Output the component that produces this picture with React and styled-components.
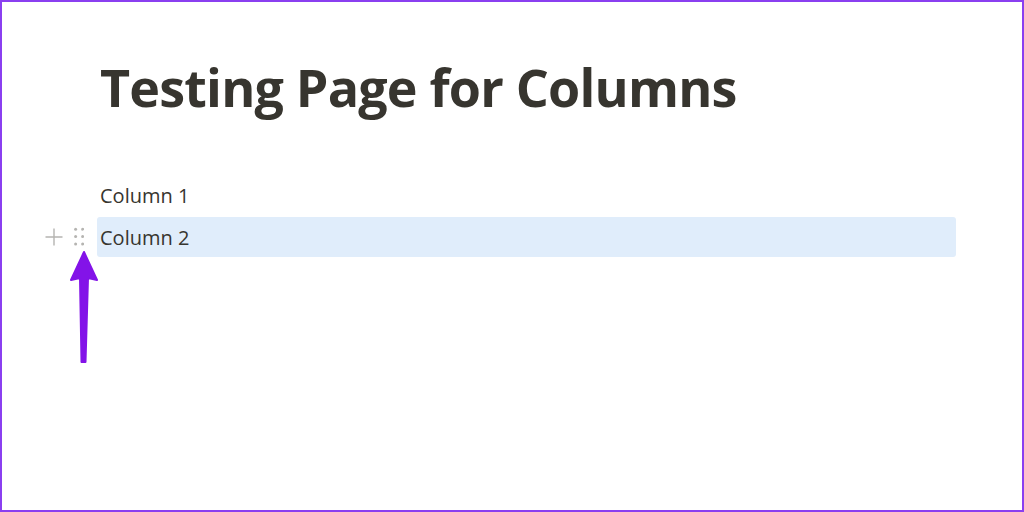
import React from 'react'
import styled, { createGlobalStyle } from 'styled-components'

const GlobalStyle = createGlobalStyle`
  html, body {
    margin: 0;
    padding: 0;
    background: #ffffff;
  }
  * {
    box-sizing: border-box;
  }
`;

const Frame = styled.div`
  width: 1024px;
  height: 512px;
  border: 2px solid #8a3ff0;
  background: #ffffff;
  position: relative;
  overflow: hidden;
  font-family: "Open Sans", "Noto Sans", sans-serif;
  color: #37352f;
`;

const Content = styled.div`
  width: 859px;
  margin-left: 95px;
  display: flex;
  flex-direction: column;
`;

const Title = styled.h1`
  margin: 54px 0 0 0;
  padding: 0 3px;
  font-size: 52px;
  line-height: 1.2;
  font-weight: 700;
  letter-spacing: -0.8px;
  color: #37352f;
`;

const Blocks = styled.div`
  margin-top: 57px;
  display: flex;
  flex-direction: column;
  gap: 2px;
`;

const Block = styled.div`
  position: relative;
  height: 40px;
  padding: 1px 3px 0 3px;
  font-size: 20px;
  line-height: 39px;
  border-radius: 3px;
  background: ${({ selected }) => (selected ? '#e0edfb' : 'transparent')};
`;

const Handles = styled.div`
  position: absolute;
  left: -53px;
  top: 0;
  height: 40px;
  display: flex;
  align-items: center;
  gap: 10px;
`;

const Arrow = styled.svg`
  position: absolute;
  left: 64px;
  top: 248px;
`;

const PlusIcon = () => (
  <svg width="20" height="20" viewBox="0 0 20 20">
    <path d="M10 1.5V18.5M1.5 10H18.5" stroke="#b5b4b1" strokeWidth="1.4" fill="none" />
  </svg>
)

const DragIcon = () => (
  <svg width="10" height="20" viewBox="0 0 10 20">
    {[2.2, 9.6, 17].map((y) =>
      [1.6, 8.6].map((x) => (
        <circle key={`${x}-${y}`} cx={x} cy={y} r="1.5" fill="#b5b4b1" />
      ))
    )}
  </svg>
)

const blocks = [
  { text: 'Column 1' },
  { text: 'Column 2', selected: true },
]

const App = () => {
  return (
    <>
      <GlobalStyle />
      <Frame>
        <Content>
          <Title>Testing Page for Columns</Title>
          <Blocks>
            {blocks.map((b, i) => (
              <Block key={i} selected={b.selected}>
                {b.selected && (
                  <Handles>
                    <PlusIcon />
                    <DragIcon />
                  </Handles>
                )}
                {b.text}
              </Block>
            ))}
          </Blocks>
        </Content>
        <Arrow width="36" height="116" viewBox="0 0 36 116">
          <path
            d="M18 2 L31 30 L22 28 L19.5 112 L15.5 112 L14 28 L5 30 Z"
            fill="#8313e8"
            stroke="#8313e8"
            strokeWidth="2"
            strokeLinejoin="round"
          />
        </Arrow>
      </Frame>
    </>
  )
}

export default App
